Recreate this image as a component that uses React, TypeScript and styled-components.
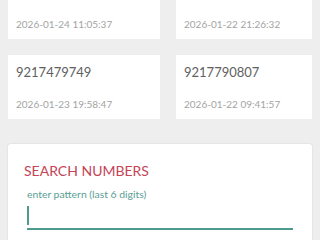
import React from 'react';
import styled, { createGlobalStyle } from 'styled-components';

const GlobalStyle = createGlobalStyle`
    html, body {
        margin: 0;
        padding: 0;
        background: #eeeeee;
        font-family: Lato, "Open Sans", sans-serif;
        overflow: hidden;
    }
`

interface Entry {
    number: string,
    date: string,
}

const entries: Entry[] = [
    { number: '9217451206', date: '2026-01-24 11:05:37' },
    { number: '9217662318', date: '2026-01-22 21:26:32' },
    { number: '9217479749', date: '2026-01-23 19:58:47' },
    { number: '9217790807', date: '2026-01-22 09:41:57' },
]

// the list is scrolled a little, so the first row is cut at the top
const Page = styled.div`
    display: flex;
    flex-direction: column;
    margin-top: -25px;
`

const Grid = styled.div`
    display: grid;
    grid-template-columns: 152px 136px;
    column-gap: 16px;
    row-gap: 16px;
    padding: 0 8px;
`

const Card = styled.div`
    background: #ffffff;
    padding: 9px 8px 9px;
    display: flex;
    flex-direction: column;
`

const Number = styled.div`
    font-size: 13px;
    line-height: 17px;
    color: #606060;
    margin-bottom: 17px;
`

const Stamp = styled.div`
    font-size: 10px;
    line-height: 12px;
    color: #a3a3a3;
`

const SearchCard = styled.div`
    margin: 25px 8px 0;
    background: #ffffff;
    border-radius: 3px;
    box-shadow: 0 0 2px rgba(0, 0, 0, 0.12);
    padding: 18px 19px 20px 16px;
`

const Title = styled.h2`
    margin: 0;
    font-size: 14px;
    line-height: 17px;
    font-weight: 400;
    color: #c44456;
`

const Field = styled.div`
    margin: 9px 0 0 3px;
    display: flex;
    flex-direction: column;
`

const Label = styled.label`
    font-size: 10.4px;
    line-height: 12px;
    color: #5a9e94;
`

const InputBox = styled.div`
    display: flex;
    align-items: center;
    height: 25px;
    border-bottom: 2px solid #4f9a8f;
    margin-top: 3px;
`

const Caret = styled.span`
    width: 2px;
    height: 19px;
    background: #4f9a8f;
`

const App: React.FC = () => {
    return (
        <>
            <GlobalStyle />
            <Page>
                <Grid>
                    {entries.map((e) => (
                        <Card key={e.number}>
                            <Number>{e.number}</Number>
                            <Stamp>{e.date}</Stamp>
                        </Card>
                    ))}
                </Grid>
                <SearchCard>
                    <Title>SEARCH NUMBERS</Title>
                    <Field>
                        <Label>enter pattern (last 6 digits)</Label>
                        <InputBox>
                            <Caret />
                        </InputBox>
                    </Field>
                </SearchCard>
            </Page>
        </>
    )
}

export default App;
